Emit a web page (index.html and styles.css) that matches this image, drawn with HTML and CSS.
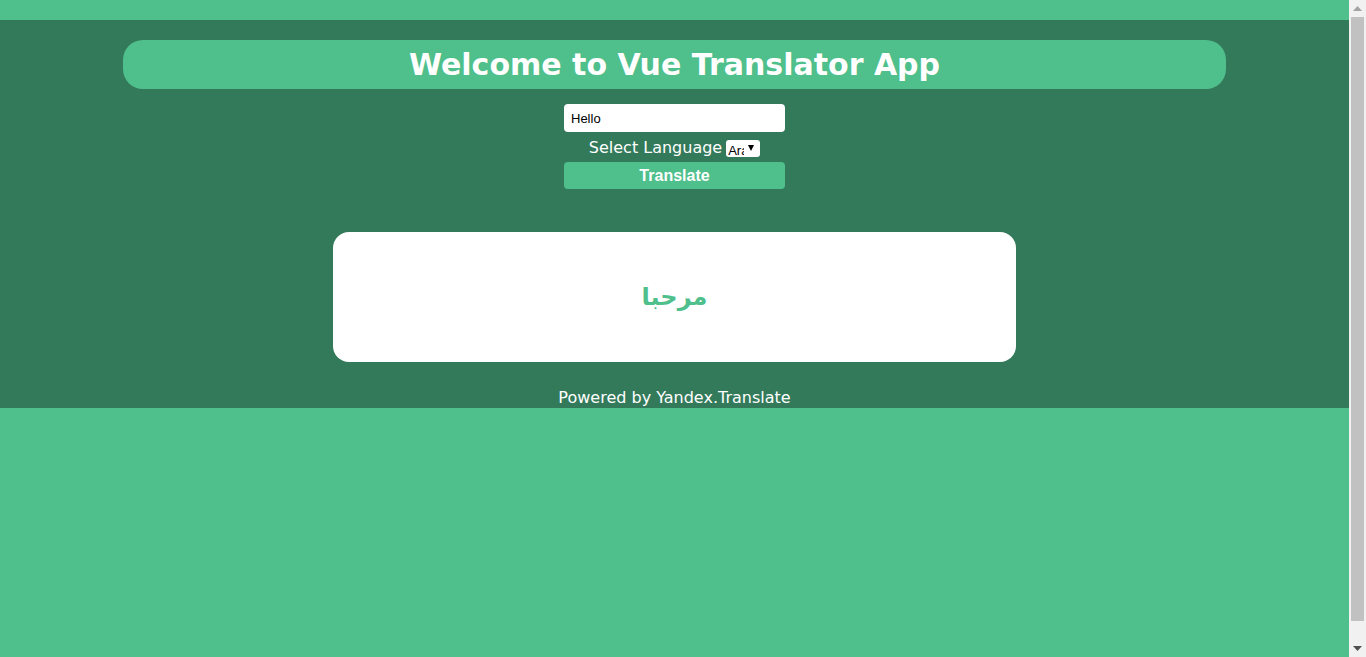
FILE: index.html
```html
<!DOCTYPE html>
<html lang="en">
<head>
<meta charset="utf-8">
<title>Vue Translator App</title>
<link rel="stylesheet" href="styles.css">
</head>
<body>
<div class="app">
  <section class="panel">
    <h1 class="title">Welcome to Vue Translator App</h1>
    <form class="form">
      <input class="text-input" type="text" value="Hello">
      <div class="lang-row">
        <span class="lang-label">Select Language</span>
        <span class="select-wrap"><select class="lang-select"><option>Arabic</option></select></span>
      </div>
      <button class="translate-btn" type="button">Translate</button>
    </form>
    <div class="result-card">
      <p class="result-text" dir="rtl" lang="ar">مرحبا</p>
    </div>
    <p class="powered">Powered by Yandex.Translate</p>
  </section>
</div>
<div class="scrollbar" aria-hidden="true">
  <div class="sb-btn"><svg width="9" height="5" viewBox="0 0 9 5"><path d="M0 5 L4.5 0 L9 5 Z" fill="#a3a3a3"/></svg></div>
  <div class="sb-track"><div class="sb-thumb"></div></div>
  <div class="sb-btn"><svg width="9" height="5" viewBox="0 0 9 5"><path d="M0 0 L9 0 L4.5 5 Z" fill="#505050"/></svg></div>
</div>
</body>
</html>
```
FILE: styles.css
```css
html {
  background: #4fbf8c;
}
body {
  margin: 0 17px 0 0;
  font-family: "DejaVu Sans", "Open Sans", sans-serif;
}
.app {
  margin-top: 20px;
}
.panel {
  background: #337a5b;
  padding: 20px 123px 0;
  height: 388px;
  box-sizing: border-box;
  display: flex;
  flex-direction: column;
  align-items: center;
}
.title {
  align-self: stretch;
  margin: 0;
  height: 49px;
  background: #4fbf8c;
  border-radius: 20px;
  color: #fff;
  font-size: 30px;
  font-weight: 700;
  line-height: 49px;
  text-align: center;
}
.form {
  margin-top: 15px;
  width: 221px;
  display: flex;
  flex-direction: column;
  align-items: center;
}
.text-input {
  width: 100%;
  box-sizing: border-box;
  height: 28px;
  border: none;
  border-radius: 4px;
  padding: 0 7px;
  font-family: "Liberation Sans", Arial, sans-serif;
  font-size: 13px;
  color: #000;
  background: #fff;
}
.lang-row {
  display: flex;
  align-items: center;
  gap: 4px;
  height: 30px;
}
.lang-label {
  color: #fff;
  font-size: 16px;
}
.select-wrap {
  position: relative;
  display: inline-block;
  width: 34px;
  height: 17px;
  background: #fff;
  border-radius: 3px;
  overflow: hidden;
  margin-top: 2px;
}
.select-wrap::after {
  content: "";
  position: absolute;
  right: 6px;
  top: 5px;
  border-left: 3.5px solid transparent;
  border-right: 3.5px solid transparent;
  border-top: 6px solid #000;
  pointer-events: none;
}
.lang-select {
  appearance: none;
  -webkit-appearance: none;
  border: none;
  background: transparent;
  width: 18px;
  height: 17px;
  padding: 0 0 0 2px;
  font-family: "Liberation Sans", Arial, sans-serif;
  font-size: 13px;
  color: #000;
  outline: none;
}
.translate-btn {
  width: 100%;
  height: 27px;
  border: none;
  border-radius: 4px;
  background: #4fbf8c;
  color: #fff;
  font-family: "Liberation Sans", Arial, sans-serif;
  font-size: 16px;
  font-weight: 700;
}
.result-card {
  margin-top: 43px;
  width: 683px;
  height: 131px;
  background: #fff;
  border-radius: 16px;
  display: flex;
  align-items: center;
  justify-content: center;
}
.result-text {
  margin: 0;
  color: #4fbf8c;
  font-family: "DejaVu Sans", sans-serif;
  font-size: 24px;
  font-weight: 700;
}
.powered {
  margin: 26px 0 0;
  color: #fff;
  font-size: 16px;
  line-height: 20px;
}
.scrollbar {
  position: fixed;
  top: 0;
  right: 0;
  width: 17px;
  height: 100vh;
  background: #f1f1f1;
  display: flex;
  flex-direction: column;
}
.sb-btn {
  height: 17px;
  display: flex;
  align-items: center;
  justify-content: center;
}
.sb-track {
  flex: 1;
  padding: 0 2px 19px;
  display: flex;
}
.sb-thumb {
  flex: 1;
  background: #c1c1c1;
}
```
